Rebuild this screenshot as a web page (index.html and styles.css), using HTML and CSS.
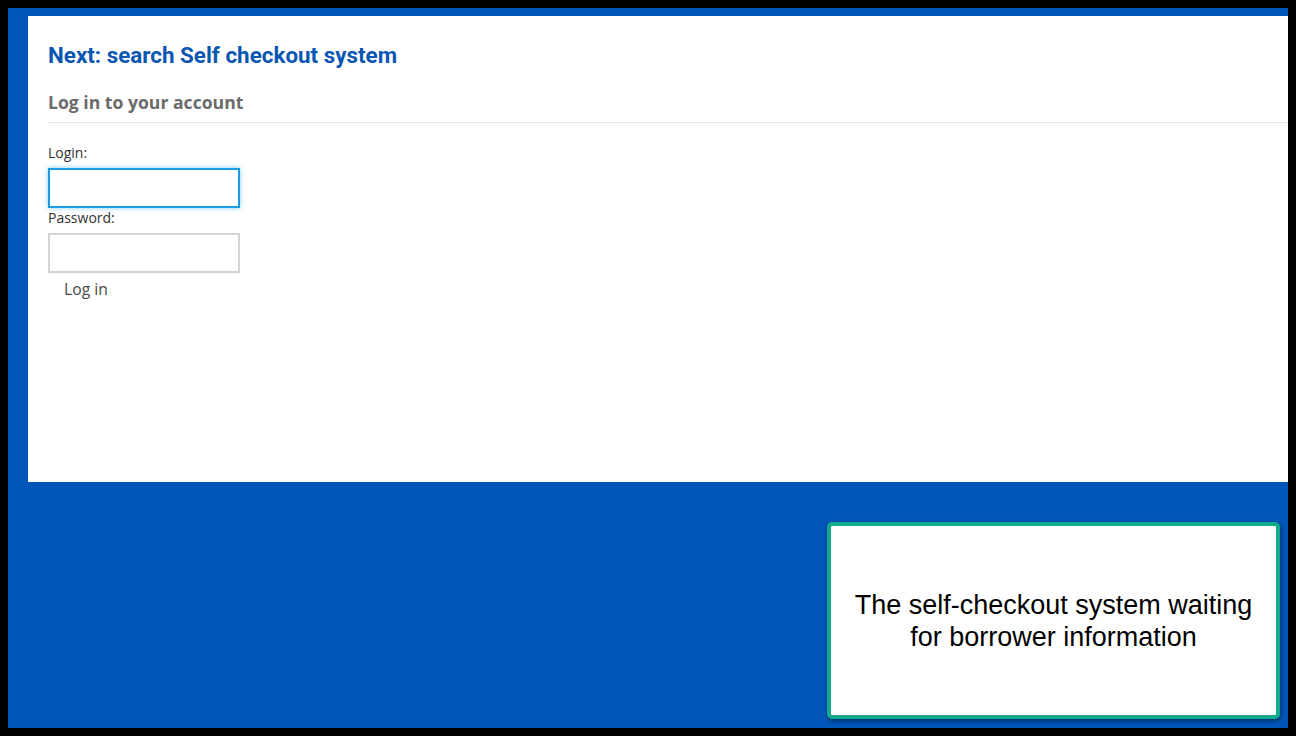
FILE: index.html
```html
<!DOCTYPE html>
<html>
<head>
<meta charset="utf-8">
<link rel="stylesheet" href="styles.css">
</head>
<body>
<div class="frame">
  <div class="panel">
    <h1 class="title">Next: search Self checkout system</h1>
    <h2 class="subtitle">Log in to your account</h2>
    <form class="login">
      <label class="lbl">Login:</label>
      <input class="field focused" type="text">
      <label class="lbl">Password:</label>
      <input class="field" type="password">
      <button class="btn" type="button">Log in</button>
    </form>
  </div>
  <div class="bottom">
    <div class="callout">The self-checkout system waiting<br>for borrower information</div>
  </div>
</div>
</body>
</html>
```
FILE: styles.css
```css
html, body { margin: 0; padding: 0; }
body { background: #000; padding: 8px; width: 1280px; height: 720px; }
.frame {
  background: #0056b8;
  width: 1280px;
  height: 720px;
  padding: 8px 0 0 20px;
  box-sizing: border-box;
  display: flex;
  flex-direction: column;
}
.panel {
  background: #fff;
  height: 466px;
  padding: 0 0 0 20px;
  box-sizing: border-box;
}
.title {
  font-family: Roboto, sans-serif;
  font-weight: 700;
  font-size: 22.4px;
  line-height: 26px;
  color: #0a56b3;
  margin: 0;
  padding-top: 26px;
}
.subtitle {
  font-family: "Open Sans", sans-serif;
  font-weight: 700;
  font-size: 17.6px;
  color: #6b6b6b;
  margin: 22px 0 0 0;
  line-height: 24px;
  padding-bottom: 8px;
  border-bottom: 1px solid #e3e3e3;
}
.login { display: flex; flex-direction: column; align-items: flex-start; padding-top: 20px; }
.lbl {
  font-family: "Open Sans", sans-serif;
  font-size: 14px;
  line-height: 19px;
  color: #333;
}
.field {
  width: 192px;
  height: 40px;
  box-sizing: border-box;
  border: 2px solid #d4d4d4;
  margin: 6px 0 0 0;
  padding: 0 6px;
  background: #fff;
  outline: none;
}
.field.focused {
  border-color: #1f9be3;
  box-shadow: 0 0 5px rgba(31,155,227,0.5);
}
.btn {
  font-family: "Open Sans", sans-serif;
  font-size: 15.7px;
  color: #4a4a4a;
  background: none;
  border: none;
  padding: 6px 16px;
  line-height: 20px;
  cursor: pointer;
}
.bottom {
  flex: 1;
  display: flex;
  justify-content: flex-end;
  align-items: flex-start;
  padding: 40px 8px 0 0;
}
.callout {
  width: 453px;
  height: 197px;
  box-sizing: border-box;
  background: #fff;
  border: 4px solid #12a98c;
  border-radius: 5px;
  box-shadow: 1px 2px 4px rgba(0,0,0,0.45);
  display: flex;
  align-items: center;
  justify-content: center;
  text-align: center;
  font-family: "Liberation Sans", Arial, sans-serif;
  font-size: 27px;
  line-height: 32px;
  color: #000;
}
```
